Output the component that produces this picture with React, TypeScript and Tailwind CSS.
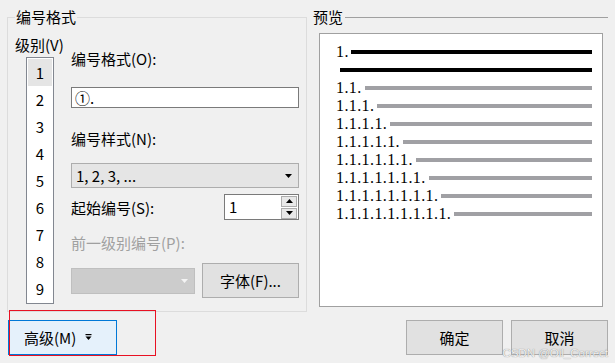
import React from "react";

const levels = [2, 3, 4, 5, 6, 7, 8, 9];

function DownTri({ color = "#000" }: { color?: string }) {
  return (
    <svg width="7" height="4" viewBox="0 0 7 4">
      <polygon points="0,0 7,0 3.5,4" fill={color} />
    </svg>
  );
}

function UpTri() {
  return (
    <svg width="7" height="4" viewBox="0 0 7 4">
      <polygon points="0,4 7,4 3.5,0" fill="#000" />
    </svg>
  );
}

export default function App() {
  return (
    <div
      className="relative w-[615px] h-[363px] overflow-hidden bg-[#f0f0f0] text-[15px] leading-[20px] text-black"
      style={{ fontFamily: '"Noto Sans CJK SC", "Noto Sans", sans-serif' }}
    >
      {/* TOP */}
      <div className="flex items-start">
        {/* 编号格式 group */}
        <div className="relative mt-[17px] ml-[7px] w-[300px] h-[295px] border border-[#dcdcdc]">
          <span className="absolute -top-[10px] left-[7px] px-[1px] bg-[#f0f0f0] leading-[18px]">
            编号格式
          </span>

          <div className="flex">
            {/* level list */}
            <div className="w-[63px] pl-[7px] flex flex-col">
              <div className="mt-[17px]">级别(V)</div>
              <div className="mt-[2px] ml-[11px] w-[28px] h-[247px] bg-white border border-[#828790] py-[1px] px-[1px]">
                <div className="h-[27px] flex items-center justify-center bg-[#e5e5e5]">1</div>
                {levels.map((n) => (
                  <div key={n} className="h-[27px] flex items-center justify-center">
                    {n}
                  </div>
                ))}
              </div>
            </div>

            {/* fields */}
            <div className="w-[228px] flex flex-col">
              <div className="mt-[31px]">编号格式(O):</div>
              <div className="mt-[18px] h-[21px] bg-white border border-[#7a7a7a] flex items-center pl-[3px]">
                ①.
              </div>

              <div className="mt-[21px]">编号样式(N):</div>
              <div className="mt-[14px] h-[25px] bg-[#e5e5e5] border border-[#adadad] flex items-center justify-between pl-[4px] pr-[6px]">
                <span>1, 2, 3, ...</span>
                <DownTri />
              </div>

              <div className="mt-[6px] flex items-center justify-between">
                <span className="mt-[2px]">起始编号(S):</span>
                <div className="w-[75px] h-[26px] bg-white border border-[#7a7a7a] flex items-center justify-between pl-[4px] pr-[1px]">
                  <span>1</span>
                  <div className="flex flex-col gap-[1px]">
                    <div className="w-[16px] h-[11px] bg-[#e8e8e8] border border-[#adadad] flex items-center justify-center">
                      <UpTri />
                    </div>
                    <div className="w-[16px] h-[11px] bg-[#e8e8e8] border border-[#adadad] flex items-center justify-center">
                      <DownTri />
                    </div>
                  </div>
                </div>
              </div>

              <div className="mt-[13px] text-[#a0a0a0]">前一级别编号(P):</div>
              <div className="mt-[10px] flex items-center gap-[7px]">
                <div className="w-[124px] h-[26px] bg-[#cccccc] border border-[#bfbfbf] flex items-center justify-end pr-[6px]">
                  <DownTri color="#f4f4f4" />
                </div>
                <button className="w-[97px] h-[35px] bg-[#e1e1e1] border border-[#adadad] flex items-center justify-center">
                  字体(F)...
                </button>
              </div>
            </div>
          </div>
        </div>

        {/* 预览 */}
        <div className="mt-[8px] ml-[6px] w-[295px] flex flex-col">
          <div className="h-[18px] flex items-center">
            <span className="leading-[18px]">预览</span>
            <div className="ml-[2px] flex-1 h-px bg-[#a0a0a0]" />
          </div>
          <div className="mt-[7px] ml-[6px] w-[284px] h-[274px] bg-white border border-[#a0a0a0] pt-[9px] pl-[16px] pr-[10px]">
            <div
              className="text-[16px] leading-[18px] tracking-[0.4px]"
              style={{ fontFamily: '"Liberation Serif", serif' }}
            >
              <div className="h-[18px] flex items-center">
                <span>1.</span>
                <div className="ml-[2px] flex-1 h-[4px] bg-black" />
              </div>
              <div className="h-[18px] flex items-center pl-[4px]">
                <div className="flex-1 h-[4px] bg-black" />
              </div>
              {levels.map((n) => (
                <div key={n} className="h-[18px] flex items-center">
                  <span>{Array.from({ length: n }, () => "1.").join("")}</span>
                  <div className="ml-[3px] flex-1 h-[4px] bg-[#a0a0a4]" />
                </div>
              ))}
            </div>
          </div>
        </div>
      </div>

      {/* BOTTOM BUTTONS */}
      <div className="mt-[8px] flex items-start">
        <button className="ml-[8px] w-[109px] h-[35px] bg-[#e5f1fb] border border-[#0078d7] flex items-center pl-[15px]">
          <span>高级(M)</span>
          <svg className="ml-[9px]" width="7" height="7" viewBox="0 0 7 7">
            <rect x="0.5" y="0" width="6" height="1.2" fill="#000" />
            <polygon points="0.5,2.5 6.5,2.5 3.5,6" fill="#000" />
          </svg>
        </button>
        <div className="ml-auto mr-[7px] flex gap-[8px]">
          <button className="w-[97px] h-[35px] bg-[#e1e1e1] border border-[#adadad] flex items-center justify-center">
            确定
          </button>
          <button className="w-[97px] h-[35px] bg-[#e1e1e1] border border-[#adadad] flex items-center justify-center">
            取消
          </button>
        </div>
      </div>

      {/* highlight box */}
      <div className="pointer-events-none absolute left-[9px] top-[310px] w-[147px] h-[46px] border border-[#e81123]" />

      {/* watermark */}
      <div
        className="pointer-events-none absolute right-[7px] top-[347px] text-[11.5px] leading-[12px] text-[#f2f2f2] [text-shadow:0_0_1px_#6a6a6a]"
        style={{ fontFamily: '"Liberation Sans", sans-serif' }}
      >
        CSDN @Oil_Correct
      </div>
    </div>
  );
}
